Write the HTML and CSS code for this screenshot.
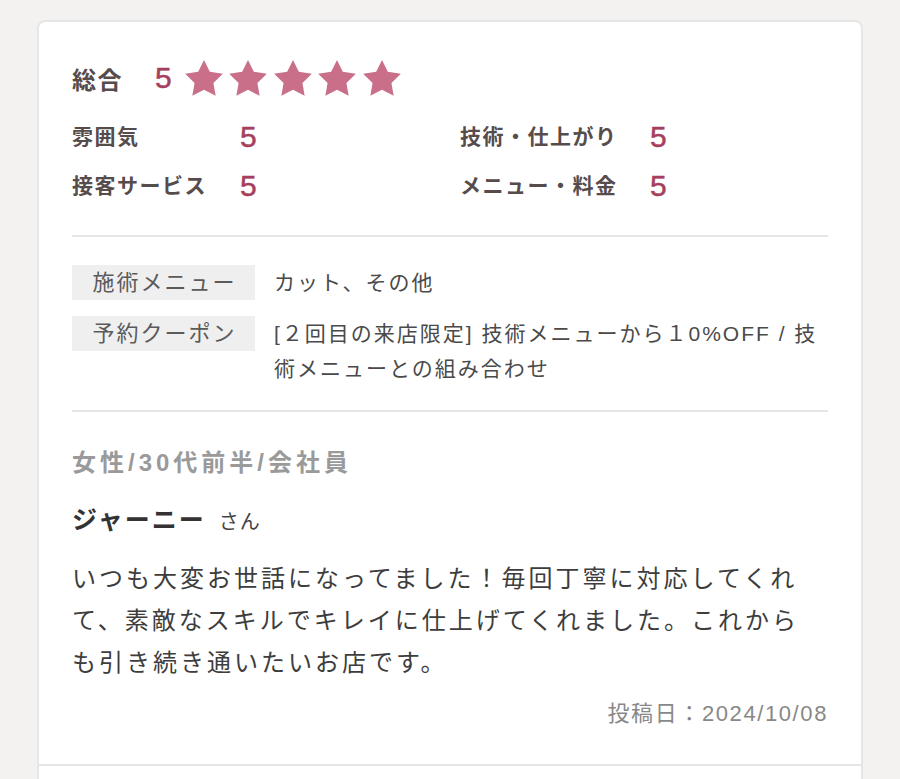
FILE: index.html
```html
<!DOCTYPE html>
<html lang="ja">
<head>
<meta charset="utf-8">
<title>口コミ</title>
<link rel="stylesheet" href="styles.css">
</head>
<body>
<main class="page">
  <section class="card">
    <article class="review">
      <div class="ratings">
        <div class="overall">
          <span class="overall-label">総合</span>
          <span class="score score-main">5</span>
          <span class="stars">
            <svg class="star" viewBox="2 2 20 19.1" width="38" height="36"><path d="M12 2l3.09 6.26L22 9.27l-5 4.87 1.18 6.88L12 17.77l-6.18 3.25L7 14.14 2 9.27l6.91-1.01L12 2z"/></svg>
            <svg class="star" viewBox="2 2 20 19.1" width="38" height="36"><path d="M12 2l3.09 6.26L22 9.27l-5 4.87 1.18 6.88L12 17.77l-6.18 3.25L7 14.14 2 9.27l6.91-1.01L12 2z"/></svg>
            <svg class="star" viewBox="2 2 20 19.1" width="38" height="36"><path d="M12 2l3.09 6.26L22 9.27l-5 4.87 1.18 6.88L12 17.77l-6.18 3.25L7 14.14 2 9.27l6.91-1.01L12 2z"/></svg>
            <svg class="star" viewBox="2 2 20 19.1" width="38" height="36"><path d="M12 2l3.09 6.26L22 9.27l-5 4.87 1.18 6.88L12 17.77l-6.18 3.25L7 14.14 2 9.27l6.91-1.01L12 2z"/></svg>
            <svg class="star" viewBox="2 2 20 19.1" width="38" height="36"><path d="M12 2l3.09 6.26L22 9.27l-5 4.87 1.18 6.88L12 17.77l-6.18 3.25L7 14.14 2 9.27l6.91-1.01L12 2z"/></svg>
          </span>
        </div>
        <dl class="sub-ratings">
          <dt class="sub-label">雰囲気</dt>
          <dd class="score">5</dd>
          <dt class="sub-label">技術・仕上がり</dt>
          <dd class="score">5</dd>
          <dt class="sub-label">接客サービス</dt>
          <dd class="score">5</dd>
          <dt class="sub-label">メニュー・料金</dt>
          <dd class="score">5</dd>
        </dl>
      </div>

      <dl class="menu-info">
        <dt class="menu-label">施術メニュー</dt>
        <dd class="menu-value">カット、その他</dd>
        <dt class="menu-label">予約クーポン</dt>
        <dd class="menu-value">[２回目の来店限定] 技術メニューから１0%OFF / 技術メニューとの組み合わせ</dd>
      </dl>

      <div class="comment">
        <p class="reviewer-attr">女性/30代前半/会社員</p>
        <p class="reviewer-name">ジャーニー<span class="honorific">さん</span></p>
        <p class="comment-body">いつも大変お世話になってました！毎回丁寧に対応してくれて、素敵なスキルでキレイに仕上げてくれました。これからも引き続き通いたいお店です。</p>
        <p class="posted">投稿日：2024/10/08</p>
      </div>
    </article>
  </section>
</main>
</body>
</html>
```

FILE: styles.css
```css
html, body {
  height: 100%;
  overflow: hidden;
}

body {
  margin: 0;
  background: #f3f2f1;
  font-family: "Liberation Sans", "Noto Sans CJK JP", sans-serif;
  color: #444;
}

.page {
  padding: 20px 37px 0;
}

.card {
  background: #fff;
  border: 2px solid #e6e6e6;
  border-radius: 8px 8px 0 0;
  min-height: 900px;
}

.review {
  padding: 36px 33px 35px;
  border-bottom: 2px solid #e6e6e6;
}

p, dl, dd {
  margin: 0;
}

/* ratings */
.ratings {
  padding-bottom: 29px;
  border-bottom: 2px solid #e6e6e6;
}

.overall {
  display: flex;
  align-items: center;
  height: 40px;
}

.overall-label {
  font-size: 24px;
  font-weight: bold;
  letter-spacing: 1.5px;
  color: #574c4c;
  width: 83px;
}

.score {
  font-family: "Liberation Sans", sans-serif;
  font-size: 30px;
  color: #a63f5d;
  -webkit-text-stroke: 0.5px #a63f5d;
  line-height: 40px;
}

.score-main {
  margin-right: 13px;
}

.stars {
  display: flex;
  gap: 6.5px;
}

.star {
  display: block;
  fill: #c96f89;
}

.sub-ratings {
  display: grid;
  grid-template-columns: 168px 220px 190px auto;
  row-gap: 9px;
  margin-top: 19px;
  align-items: center;
}

.sub-label {
  font-size: 21px;
  font-weight: bold;
  letter-spacing: 1.5px;
  color: #574c4c;
  line-height: 40px;
}

/* menu info */
.menu-info {
  display: grid;
  grid-template-columns: 183px 1fr;
  column-gap: 19px;
  row-gap: 16px;
  padding: 28px 0 24px;
  border-bottom: 2px solid #e6e6e6;
}

.menu-label {
  align-self: start;
  height: 35px;
  line-height: 35px;
  background: #efefef;
  text-align: center;
  font-size: 22px;
  letter-spacing: 2px;
  color: #5a5a5a;
  text-indent: 2px;
}

.menu-value {
  font-size: 21px;
  letter-spacing: 2px;
  line-height: 35px;
  color: #4a4a4a;
}

/* comment */
.comment {
  padding-top: 33px;
}

.reviewer-attr {
  font-size: 24px;
  font-weight: bold;
  letter-spacing: 4px;
  line-height: 36px;
  color: #9a9a9a;
}

.reviewer-name {
  margin-top: 21px;
  font-size: 25px;
  font-weight: bold;
  letter-spacing: 2px;
  line-height: 36px;
  color: #333;
}

.honorific {
  margin-left: 13px;
  font-size: 20px;
  font-weight: normal;
  letter-spacing: 1px;
  color: #444;
}

.comment-body {
  margin-top: 18px;
  padding-right: 10px;
  font-size: 24px;
  letter-spacing: 3px;
  line-height: 42px;
  color: #3d3d3d;
}

.posted {
  margin-top: 15px;
  text-align: right;
  font-size: 22px;
  letter-spacing: 1.6px;
  line-height: 30px;
  color: #888;
}
```
